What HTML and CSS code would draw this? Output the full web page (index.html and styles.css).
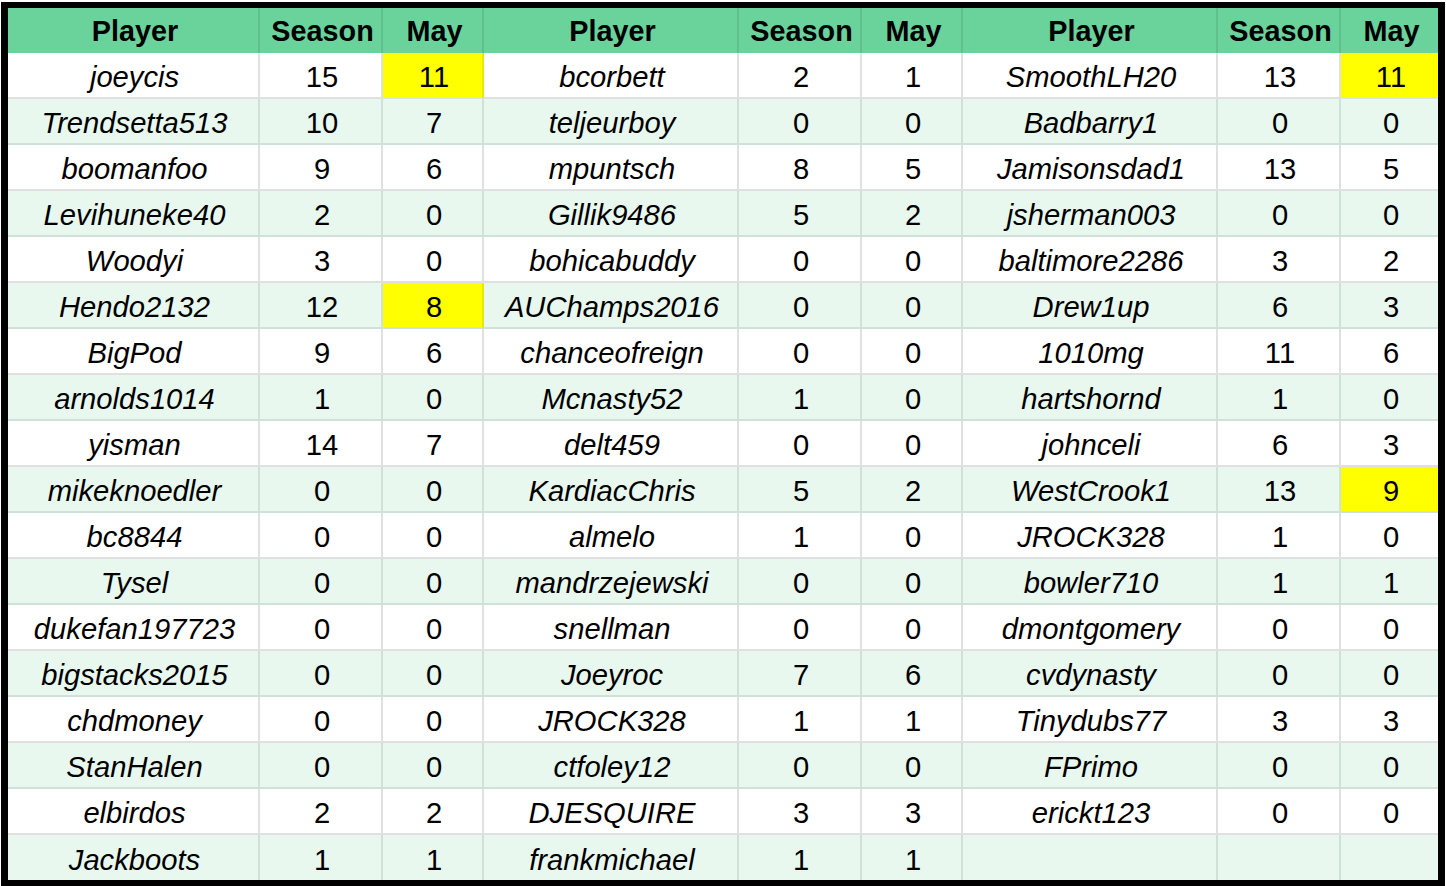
FILE: index.html
```html
<!DOCTYPE html>
<html>
<head>
<meta charset="utf-8">
<link rel="stylesheet" href="styles.css">
</head>
<body>
<div class="frame">
<table class="sheet">
<colgroup>
<col class="c-p1"><col class="c-s"><col class="c-m">
<col class="c-p"><col class="c-s"><col class="c-m">
<col class="c-p"><col class="c-s"><col class="c-m3">
</colgroup>
<thead>
<tr class="head"><th>Player</th><th>Season</th><th>May</th><th>Player</th><th>Season</th><th>May</th><th>Player</th><th>Season</th><th class="last">May</th></tr>
</thead>
<tbody>
<tr class="w"><td class="n">joeycis</td><td>15</td><td class="hl">11</td><td class="n">bcorbett</td><td>2</td><td>1</td><td class="n">SmoothLH20</td><td>13</td><td class="hl last">11</td></tr>
<tr class="g"><td class="n">Trendsetta513</td><td>10</td><td>7</td><td class="n">teljeurboy</td><td>0</td><td>0</td><td class="n">Badbarry1</td><td>0</td><td class="last">0</td></tr>
<tr class="w"><td class="n">boomanfoo</td><td>9</td><td>6</td><td class="n">mpuntsch</td><td>8</td><td>5</td><td class="n">Jamisonsdad1</td><td>13</td><td class="last">5</td></tr>
<tr class="g"><td class="n">Levihuneke40</td><td>2</td><td>0</td><td class="n">Gillik9486</td><td>5</td><td>2</td><td class="n">jsherman003</td><td>0</td><td class="last">0</td></tr>
<tr class="w"><td class="n">Woodyi</td><td>3</td><td>0</td><td class="n">bohicabuddy</td><td>0</td><td>0</td><td class="n">baltimore2286</td><td>3</td><td class="last">2</td></tr>
<tr class="g"><td class="n">Hendo2132</td><td>12</td><td class="hl">8</td><td class="n">AUChamps2016</td><td>0</td><td>0</td><td class="n">Drew1up</td><td>6</td><td class="last">3</td></tr>
<tr class="w"><td class="n">BigPod</td><td>9</td><td>6</td><td class="n">chanceofreign</td><td>0</td><td>0</td><td class="n">1010mg</td><td>11</td><td class="last">6</td></tr>
<tr class="g"><td class="n">arnolds1014</td><td>1</td><td>0</td><td class="n">Mcnasty52</td><td>1</td><td>0</td><td class="n">hartshornd</td><td>1</td><td class="last">0</td></tr>
<tr class="w"><td class="n">yisman</td><td>14</td><td>7</td><td class="n">delt459</td><td>0</td><td>0</td><td class="n">johnceli</td><td>6</td><td class="last">3</td></tr>
<tr class="g"><td class="n">mikeknoedler</td><td>0</td><td>0</td><td class="n">KardiacChris</td><td>5</td><td>2</td><td class="n">WestCrook1</td><td>13</td><td class="hl last">9</td></tr>
<tr class="w"><td class="n">bc8844</td><td>0</td><td>0</td><td class="n">almelo</td><td>1</td><td>0</td><td class="n">JROCK328</td><td>1</td><td class="last">0</td></tr>
<tr class="g"><td class="n">Tysel</td><td>0</td><td>0</td><td class="n">mandrzejewski</td><td>0</td><td>0</td><td class="n">bowler710</td><td>1</td><td class="last">1</td></tr>
<tr class="w"><td class="n">dukefan197723</td><td>0</td><td>0</td><td class="n">snellman</td><td>0</td><td>0</td><td class="n">dmontgomery</td><td>0</td><td class="last">0</td></tr>
<tr class="g"><td class="n">bigstacks2015</td><td>0</td><td>0</td><td class="n">Joeyroc</td><td>7</td><td>6</td><td class="n">cvdynasty</td><td>0</td><td class="last">0</td></tr>
<tr class="w"><td class="n">chdmoney</td><td>0</td><td>0</td><td class="n">JROCK328</td><td>1</td><td>1</td><td class="n">Tinydubs77</td><td>3</td><td class="last">3</td></tr>
<tr class="g"><td class="n">StanHalen</td><td>0</td><td>0</td><td class="n">ctfoley12</td><td>0</td><td>0</td><td class="n">FPrimo</td><td>0</td><td class="last">0</td></tr>
<tr class="w"><td class="n">elbirdos</td><td>2</td><td>2</td><td class="n">DJESQUIRE</td><td>3</td><td>3</td><td class="n">erickt123</td><td>0</td><td class="last">0</td></tr>
<tr class="g end"><td class="n">Jackboots</td><td>1</td><td>1</td><td class="n">frankmichael</td><td>1</td><td>1</td><td class="n"></td><td></td><td class="last"></td></tr>
</tbody>
</table>
</div>
</body>
</html>
```

FILE: styles.css
```css
html, body {
  margin: 0;
  padding: 0;
  background: #ffffff;
}

.frame {
  margin: 2px 0 0 1px;
  width: 1430px;
  border-style: solid;
  border-color: #000000;
  border-width: 6px 7px 6px 7px;
}

.sheet {
  border-collapse: separate;
  border-spacing: 0;
  table-layout: fixed;
  width: 1430px;
  font-family: "Liberation Sans", Arial, sans-serif;
  font-size: 29.2px;
  color: #000;
}

.c-p1 { width: 252px; }
.c-p { width: 255px; }
.c-s { width: 123px; }
.c-m { width: 101px; }
.c-m3 { width: 97px; }

.sheet th,
.sheet td {
  box-sizing: border-box;
  padding: 0 0 0 3px;
  text-align: center;
  vertical-align: middle;
  white-space: nowrap;
  overflow: hidden;
  border-right: 2px solid #e0e0e0;
  border-bottom: 2px solid #e0e0e0;
}

.sheet .last { border-right: none; }

.head th {
  height: 45px;
  font-size: 28.8px;
  font-weight: bold;
  background: #6ad39b;
  border-right-color: #5fc08c;
  border-bottom: none;
  line-height: 43px;
  padding-top: 2px;
  padding-left: 4px;
}

.sheet td { height: 46px; line-height: 39px; padding-top: 5px; }

.w td { background: #ffffff; border-color: #e0e0e0; }
.g td { background: #e8f8ef; border-color: #cfe2d7; }

.end td { height: 45px; border-bottom: none; line-height: 40px; }

.sheet td.n { font-style: italic; }

.sheet td.hl {
  background: #ffff00;
  border-right-color: #e8e800;
}
```
